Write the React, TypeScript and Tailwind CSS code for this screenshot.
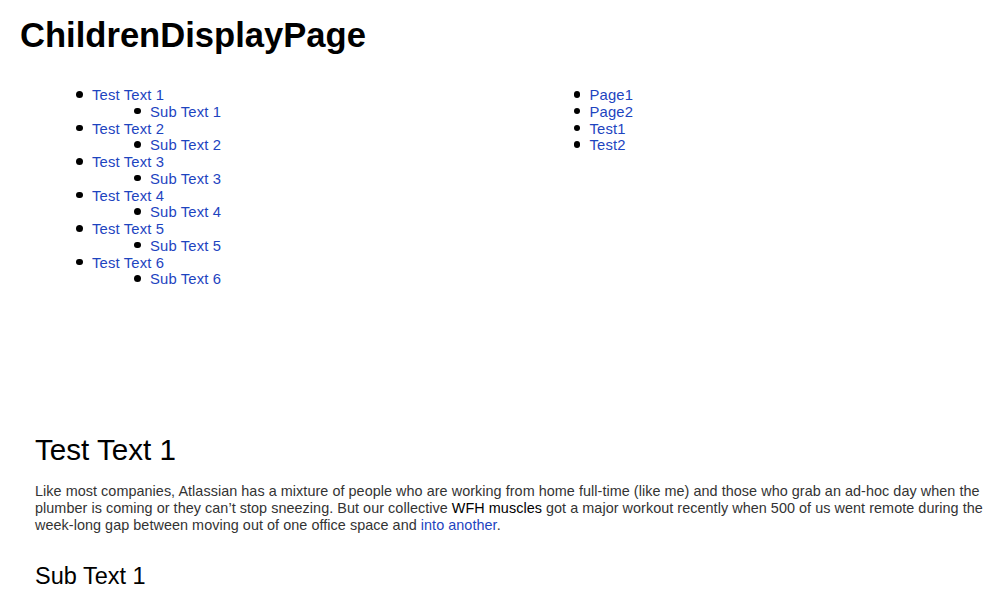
import React from "react";

const items = [1, 2, 3, 4, 5, 6];
const link = "text-[#1d44bf]";
const li =
  "relative before:absolute before:left-[-16px] before:top-[4px] before:h-[6.5px] before:w-[6.5px] before:rounded-full before:bg-black before:content-['']";

export default function App() {
  return (
    <div className="min-h-[590px] bg-white text-black" style={{ fontFamily: '"Liberation Sans", Arial, Helvetica, sans-serif' }}>
      <h1 className="px-[20px] pt-[15px] text-[34.6px] leading-[40px] font-bold">ChildrenDisplayPage</h1>
      <div className="mt-[32px] grid h-[347px] grid-cols-2 text-[14.8px] leading-[16.75px] tracking-[0.15px]">
        <ul className="pl-[92px]">
          {items.map((i) => (
            <li key={i} className={li}>
              <a className={link}>Test Text {i}</a>
              <ul className="pl-[58px]">
                <li className={li}>
                  <a className={link}>Sub Text {i}</a>
                </li>
              </ul>
            </li>
          ))}
        </ul>
        <ul className="pl-[90px]">
          {["Page1", "Page2", "Test1", "Test2"].map((t) => (
            <li key={t} className={li}>
              <a className={link}>{t}</a>
            </li>
          ))}
        </ul>
      </div>
      <div className="pl-[35px] pr-[15px]">
        <h2 className="text-[29.6px] leading-[32px]">Test Text 1</h2>
        <p className="mt-[17px] text-[14.4px] leading-[16.8px] text-[#333333] tracking-[0.05px]">
          Like most companies, Atlassian has a mixture of people who are working from home full-time (like me) and those who grab an ad-hoc day when the plumber is coming or they can’t stop sneezing. But our collective <span className="text-black">WFH muscles</span> got a major workout recently when 500 of us went remote during the week-long gap between moving out of one office space and <a className={link}>into another</a>.
        </p>
        <h3 className="mt-[30px] text-[23.5px] leading-[26px]">Sub Text 1</h3>
      </div>
    </div>
  );
}
